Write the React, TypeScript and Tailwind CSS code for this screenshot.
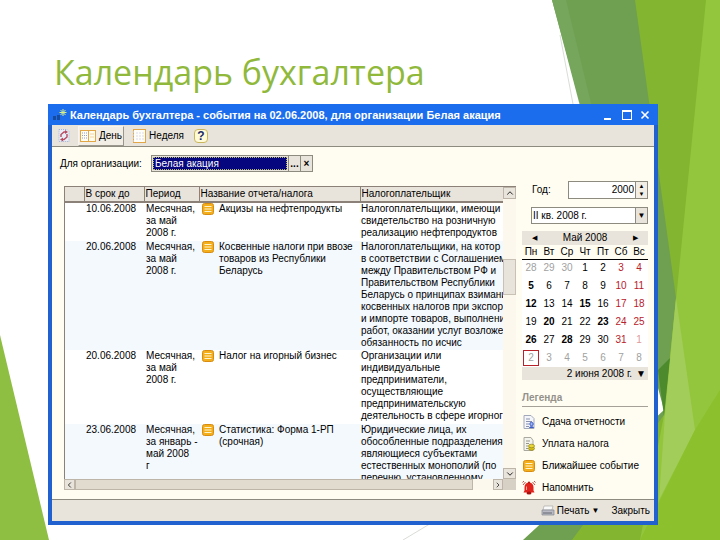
import { ChevronDown, ChevronLeft, ChevronRight, ChevronUp } from "lucide-react";

const rows = [
  {
    date: "10.06.2008",
    period: "Месячная,\nза май\n2008 г.",
    name: "Акцизы на нефтепродукты",
    payer: "Налогоплательщики, имеющи\nсвидетельство на розничную\nреализацию нефтепродуктов",
    height: "h-[39px]",
  },
  {
    date: "20.06.2008",
    period: "Месячная,\nза май\n2008 г.",
    name: "Косвенные налоги при ввозе\nтоваров из Республики\nБеларусь",
    payer:
      "Налогоплательщики, на котор\nв соответствии с Соглашением\nмежду Правительством РФ и\nПравительством Республики\nБеларусь о принципах взимани\nкосвенных налогов при экспор\nи импорте товаров, выполнени\nработ, оказании услуг возложе\nобязанность по исчис",
    height: "h-[109px]",
  },
  {
    date: "20.06.2008",
    period: "Месячная,\nза май\n2008 г.",
    name: "Налог на игорный бизнес",
    payer:
      "Организации или\nиндивидуальные\nпредприниматели,\nосуществляющие\nпредпринимательскую\nдеятельность в сфере игорног",
    height: "h-[74px]",
  },
  {
    date: "23.06.2008",
    period: "Месячная,\nза январь -\nмай 2008\nг",
    name: "Статистика: Форма 1-РП\n(срочная)",
    payer:
      "Юридические лица, их\nобособленные подразделения\nявляющиеся субъектами\nестественных монополий (по\nперечню, установленному",
    height: "h-[64px]",
  },
];

const weekDays = ["Пн", "Вт", "Ср", "Чт", "Пт", "Сб", "Вс"];

const weeks = [
  [28, 29, 30, 1, 2, 3, 4],
  [5, 6, 7, 8, 9, 10, 11],
  [12, 13, 14, 15, 16, 17, 18],
  [19, 20, 21, 22, 23, 24, 25],
  [26, 27, 28, 29, 30, 31, 1],
  [2, 3, 4, 5, 6, 7, 8],
];

const boldDays = [5, 12, 15, 20, 23, 26, 28];

const dayClass = (week: number, col: number, day: number) => {
  if (week === 5 && col === 0) return "text-neutral-400 outline outline-1 outline-[#b8202a]";
  if (week === 5 || (week === 0 && col < 3)) return "text-neutral-400";
  if (week === 4 && col === 6) return "text-[#e09a9a]";
  if (col > 4) return "text-[#b8202a]";
  if (boldDays.includes(day)) return "font-bold text-black";
  return "text-black";
};

const Backdrop = () => (
  <svg
    className="absolute inset-0 h-full w-full"
    viewBox="0 0 720 540"
    preserveAspectRatio="none"
    aria-hidden="true"
  >
    <path d="M560 35 576 120M403 540 720 350" stroke="#c9cfc4" strokeWidth="0.7" />
    <path d="M552 0H720V540H523L664 410Z" fill="#6f9f50" />
    <path d="M552 0H566L600 140H589Z" fill="#76a65b" />
    <path d="M635 0H720V540H572L664 415 676 298Z" fill="#83b530" />
    <path d="M706 0H720V540H640L664 415 677 290Z" fill="#93c63c" />
    <path d="M658 370 670 358 664 416Z" fill="#4d8a2d" />
    <path d="M676 298 695 430 659 500 665 415Z" fill="#a3cd5b" />
    <path d="M695 430 720 390V540H640Z" fill="#8cc02c" />
    <path d="M0 335 49 540H0Z" fill="#8fbf42" />
  </svg>
);

const EventIcon = () => (
  <svg className="h-3 w-3 shrink-0" viewBox="0 0 12 12" aria-hidden="true">
    <rect x="0.5" y="0.5" width="11" height="11" rx="2" fill="#f3ae1c" stroke="#d98c12" />
    <path d="M2.5 3.5h7M2.5 6h7M2.5 8.5h7" stroke="#fff6cf" strokeWidth="1.2" />
  </svg>
);

const ReportIcon = () => (
  <svg className="h-[14px] w-3" viewBox="0 0 12 14" aria-hidden="true">
    <path d="M1 .5h7l3 3v10H1z" fill="#f4f6fb" stroke="#a3a8b8" />
    <path d="M3 4h4M3 6.5h6M3 9h3M3 11.5h3" stroke="#8a91ac" />
    <circle cx="8.5" cy="9" r="1.7" fill="#9fb6f0" stroke="#3c5cc8" />
    <path d="M6 13c.4-2.5 4.6-2.5 5 0z" fill="#3c5cc8" />
  </svg>
);

const TaxIcon = () => (
  <svg className="h-[14px] w-3" viewBox="0 0 12 14" aria-hidden="true">
    <path d="M1 .5h7l2 3v10H1z" fill="#f4f4ef" stroke="#aaa99f" />
    <path d="M3 4h4M3 6.5h3M3 9h2M3 11.5h2" stroke="#96958c" />
    <ellipse cx="8.5" cy="11.5" rx="3" ry="1.8" fill="#d8c21c" stroke="#8f7f10" strokeWidth="0.7" />
    <ellipse cx="8.5" cy="9" rx="3" ry="1.8" fill="#e8d63a" stroke="#8f7f10" strokeWidth="0.7" />
  </svg>
);

const AlarmIcon = () => (
  <svg className="h-[14px] w-3 overflow-visible" viewBox="0 0 12 14" aria-hidden="true">
    <path d="M0 4 2.5 1M12 4 9.5 1M-.5 1.5 1 0M12.5 1.5 11 0" stroke="#c9504a" fill="none" />
    <path d="M1.5 9.5V6a4.500 4.500 0 0 1 9 0v3.500l1 2H.5z" fill="#e0231d" />
    <path d="M3.5 9V5.5" stroke="#ff9a8f" />
    <ellipse cx="6" cy="12" rx="2.5" ry="1.5" fill="#a8120e" />
    <circle cx="6" cy="1.6" r="1" fill="#a8120e" />
  </svg>
);

const legend = [
  { icon: <ReportIcon />, text: "Сдача отчетности" },
  { icon: <TaxIcon />, text: "Уплата налога" },
  { icon: <EventIcon />, text: "Ближайшее событие" },
  { icon: <AlarmIcon />, text: "Напомнить" },
];

const TitleBar = () => (
  <header className="flex h-[21px] items-center gap-[2px] bg-[#1c6ded] px-1 text-white">
    <svg className="h-3 w-4" viewBox="0 0 16 12" aria-hidden="true">
      <path d="M1 11V7h3v4zM5 11V6h3v5z" fill="#164a9c" />
      <path d="M11 0v7M7.5 3.5h7M8.5 1l5 5M13.5 1l-5 5" stroke="#d8f08a" />
    </svg>
    <h2 className="flex-1 truncate text-[11px] font-bold">
      Календарь бухгалтера - события на 02.06.2008, для организации Белая акация
    </h2>
    <div className="flex gap-2 pr-1">
      <button aria-label="Свернуть" className="flex h-[10px] w-[10px] items-end">
        <span className="h-[2px] w-[7px] bg-white" />
      </button>
      <button aria-label="Развернуть" className="h-[10px] w-[10px] border border-t-2 border-white" />
      <button aria-label="Закрыть окно">
        <svg className="h-[10px] w-[10px]" viewBox="0 0 10 10">
          <path d="M1.5 1.5l7 7M8.5 1.5l-7 7" stroke="#fff" strokeWidth="1.6" />
        </svg>
      </button>
    </div>
  </header>
);

const Toolbar = () => (
  <div className="flex h-[22px] items-center border-b border-[#8d8a80] bg-[#e9e4db] px-1">
    <button aria-label="Обновить" className="px-[2px]">
      <svg className="h-[13px] w-3" viewBox="0 0 12 13">
        <path d="M1 .5h8l2 2v10H1z" fill="#e8edf8" stroke="#a4b3d6" strokeDasharray="1 1" />
        <path d="M3 8V5.5L6 3h2M9 5v3l-3 2.5H4" stroke="#b84a60" strokeWidth="1.4" fill="none" />
        <path d="M7 1l3 2-3 2zM5 8.5 2 10.5l3 2z" fill="#b84a60" />
      </svg>
    </button>
    <button className="ml-[6px] flex h-5 items-center gap-[3px] border border-[#f7f5ee] border-r-[#9b978c] border-b-[#9b978c] bg-[#f2eee6] px-px">
      <svg className="h-3 w-4" viewBox="0 0 16 12" aria-hidden="true">
        <rect x="0.5" y="0.5" width="15" height="11" fill="#fffdf2" stroke="#e2a647" />
        <path d="M2 3h5M2 5.5h5M2 8h5" stroke="#8d9ccc" strokeDasharray="1 1" />
        <path d="M8.5 1v10" stroke="#e2a647" />
        <path d="M10 4h4M10 7h4" stroke="#efd4a4" />
      </svg>
      День
    </button>
    <button className="ml-2 flex items-center gap-[3px]">
      <svg className="h-[14px] w-[14px]" viewBox="0 0 14 14" aria-hidden="true">
        <rect x="1.5" y="0.5" width="12" height="13" fill="#fffdf8" stroke="#e2a647" />
        <path d="M1 2v11M4 4h8M4 7h8M4 10h8" stroke="#d9dbe8" strokeDasharray="2 1" />
      </svg>
      Неделя
    </button>
    <button
      aria-label="Справка"
      className="ml-[10px] h-[14px] w-[14px] rounded-sm border border-[#c9b65c] bg-[#fffbd8] text-xs leading-3 font-bold text-[#1b2a6b]"
    >
      ?
    </button>
  </div>
);

const EventTable = () => (
  <div className="min-w-0 flex-1">
    <div className="flex h-[293px] border-t border-l border-[#8b8178]">
      <div className="min-w-0 flex-1 overflow-hidden bg-white">
        <table className="w-full table-fixed border-collapse leading-3">
          <colgroup>
            <col className="w-[19px]" />
            <col className="w-[60px]" />
            <col className="w-[55px]" />
            <col className="w-[161px]" />
            <col />
          </colgroup>
          <thead>
            <tr className="h-[15px] border-b-2 border-[#8b8178] bg-[#e9e4db] text-left">
              <th className="border-r border-[#8b8178]" aria-label="Строка" />
              {["В срок до", "Период", "Название отчета/налога", "Налогоплательщик"].map((title) => (
                <th key={title} className="border-r border-[#8b8178] px-px font-normal whitespace-nowrap last:border-r-0">
                  {title}
                </th>
              ))}
            </tr>
          </thead>
          <tbody>
            {rows.map((row, i) => (
              <tr key={i} className={`${row.height} align-top whitespace-pre even:bg-[#f4f9fe]`}>
                <td />
                <td className="px-[2px]">{row.date}</td>
                <td className="px-[2px]">{row.period}</td>
                <td className="px-[3px]">
                  <div className="flex gap-[5px]">
                    <EventIcon />
                    {row.name}
                  </div>
                </td>
                <td className="overflow-hidden pl-px">{row.payer}</td>
              </tr>
            ))}
          </tbody>
        </table>
      </div>
      <div className="flex w-[13px] flex-col bg-[#fcf8ee]">
        <button aria-label="Вверх" className="flex h-3 items-center justify-center border border-[#bdb6a8] bg-[#e9e4db]">
          <ChevronUp size={10} />
        </button>
        <div className="flex-1 pt-[60px]">
          <div className="h-9 border border-[#c9c2b4] bg-[#e9e4db]" />
        </div>
        <button aria-label="Вниз" className="flex h-[11px] items-center justify-center border border-[#bdb6a8] bg-[#e9e4db]">
          <ChevronDown size={10} />
        </button>
      </div>
    </div>
    <div className="flex h-[11px] bg-[#fcf8ee]">
      <button aria-label="Влево" className="flex w-[11px] items-center justify-center border border-[#bdb6a8] bg-[#e9e4db]">
        <ChevronLeft size={10} />
      </button>
      <div className="flex-1 pr-5">
        <div className="h-full border border-[#bdb6a8] bg-[#e0dacf]" />
      </div>
      <button aria-label="Вправо" className="flex w-[10px] items-center justify-center border border-[#bdb6a8] bg-[#e9e4db]">
        <ChevronRight size={10} />
      </button>
      <div className="w-[13px] bg-[#d6d0c5]" />
    </div>
  </div>
);

const Calendar = () => (
  <div className="mt-[7px]">
    <div className="flex h-[14px] items-center justify-between bg-[#e9e4db] px-[10px]">
      <button aria-label="Предыдущий месяц" className="text-[7px]">◀</button>
      <span>Май 2008</span>
      <button aria-label="Следующий месяц" className="text-[7px]">▶</button>
    </div>
    <table className="w-full table-fixed border-collapse bg-white text-center">
      <thead>
        <tr className="h-[14px] border-b border-black bg-[#fffdf2]">
          {weekDays.map((day) => (
            <th key={day} className="font-normal">{day}</th>
          ))}
        </tr>
      </thead>
      <tbody>
        {weeks.map((week, i) => (
          <tr key={i} className="h-[18px]">
            {week.map((day, j) => (
              <td key={j}>
                <button className={`h-[14px] w-[14px] ${dayClass(i, j, day)}`}>{day}</button>
              </td>
            ))}
          </tr>
        ))}
      </tbody>
    </table>
    <button className="flex h-[13px] w-full items-center justify-end gap-1 bg-[#e9e4db] pr-[2px]">
      2 июня 2008 г.
      <span className="text-[10px]">▼</span>
    </button>
  </div>
);

const Sidebar = () => (
  <aside className="-mt-[5px] w-[126px] shrink-0">
    <div className="flex items-center">
      <label htmlFor="year" className="w-[46px] pl-[10px]">Год:</label>
      <div className="flex h-[18px] min-w-0 flex-1 border border-[#8d8a80] bg-white">
        <input id="year" className="min-w-0 flex-1 px-px text-right outline-none" defaultValue="2000" />
        <div className="flex w-3 flex-col justify-around border-l border-[#8d8a80] bg-[#f2eee6] text-center text-[6px] leading-[7px]">
          <button aria-label="Больше">▲</button>
          <button aria-label="Меньше">▼</button>
        </div>
      </div>
    </div>
    <div className="relative mt-2 ml-[9px]">
      <select
        aria-label="Квартал"
        className="block h-[17px] w-full appearance-none border border-[#8d8a80] bg-white px-px outline-none"
      >
        <option>II кв. 2008 г.</option>
      </select>
      <span className="pointer-events-none absolute inset-y-px right-px flex w-3 items-center justify-center border-l border-[#8d8a80] bg-[#e9e4db] text-[8px]">
        ▼
      </span>
    </div>
    <Calendar />
    <h3 className="mt-[10px] border-b border-[#a5a198] leading-4 font-bold text-[#94918a]">Легенда</h3>
    <ul className="mt-1">
      {legend.map((item) => (
        <li key={item.text} className="flex h-[22px] items-center gap-[7px] pl-px">
          {item.icon}
          {item.text}
        </li>
      ))}
    </ul>
  </aside>
);

const App = () => {
  return (
    <div className="relative min-h-screen overflow-hidden bg-white font-['Liberation_Sans',Arial,sans-serif] text-black">
      <Backdrop />
      <main className="relative pr-[62px] pl-12">
        <h1 className="pt-11 pb-1 pl-[6px] font-['Open_Sans','Noto_Sans',sans-serif] text-[34px] leading-[56px] text-[#90b93c]">
          Календарь бухгалтера
        </h1>
        <section className="border-4 border-t-0 border-[#2161cf] bg-[#fffdf2] text-[10px] leading-3">
          <div className="-mx-1">
            <TitleBar />
          </div>
          <Toolbar />
          <div className="flex items-center px-2 pt-2">
            <label htmlFor="org" className="w-[91px]">Для организации:</label>
            <div className="flex h-[17px] w-[162px] border border-[#8d8a80] bg-[#e9e4db]">
              <input
                id="org"
                className="m-px min-w-0 flex-1 border border-dotted border-[#b9b96a] bg-[#06067e] px-px text-white outline-none"
                defaultValue="Белая акация"
              />
              <button aria-label="Выбрать" className="w-3 border-l border-[#8d8a80] font-bold">...</button>
              <button aria-label="Очистить" className="w-3 border-l border-[#8d8a80] leading-none font-bold">×</button>
            </div>
          </div>
          <div className="flex gap-[6px] pt-[14px] pr-[6px] pl-3">
            <EventTable />
            <Sidebar />
          </div>
          <footer className="flex h-[22px] items-center justify-end gap-3 border-t border-[#8d8a80] bg-[#e9e4db] pr-1">
            <button className="flex items-center gap-[2px]">
              <svg className="h-3 w-[14px]" viewBox="0 0 14 12" aria-hidden="true">
                <path d="M3 1h9l-1 4H2z" fill="#fafafa" stroke="#aaa" strokeWidth="0.7" />
                <path d="M1 5h12v5H1z" fill="#b9bac4" stroke="#85868f" strokeWidth="0.7" />
                <path d="M2 8h9" stroke="#63646e" />
              </svg>
              Печать
              <span className="text-[8px]">▼</span>
            </button>
            <button>Закрыть</button>
          </footer>
        </section>
      </main>
    </div>
  );
};

export default App;
